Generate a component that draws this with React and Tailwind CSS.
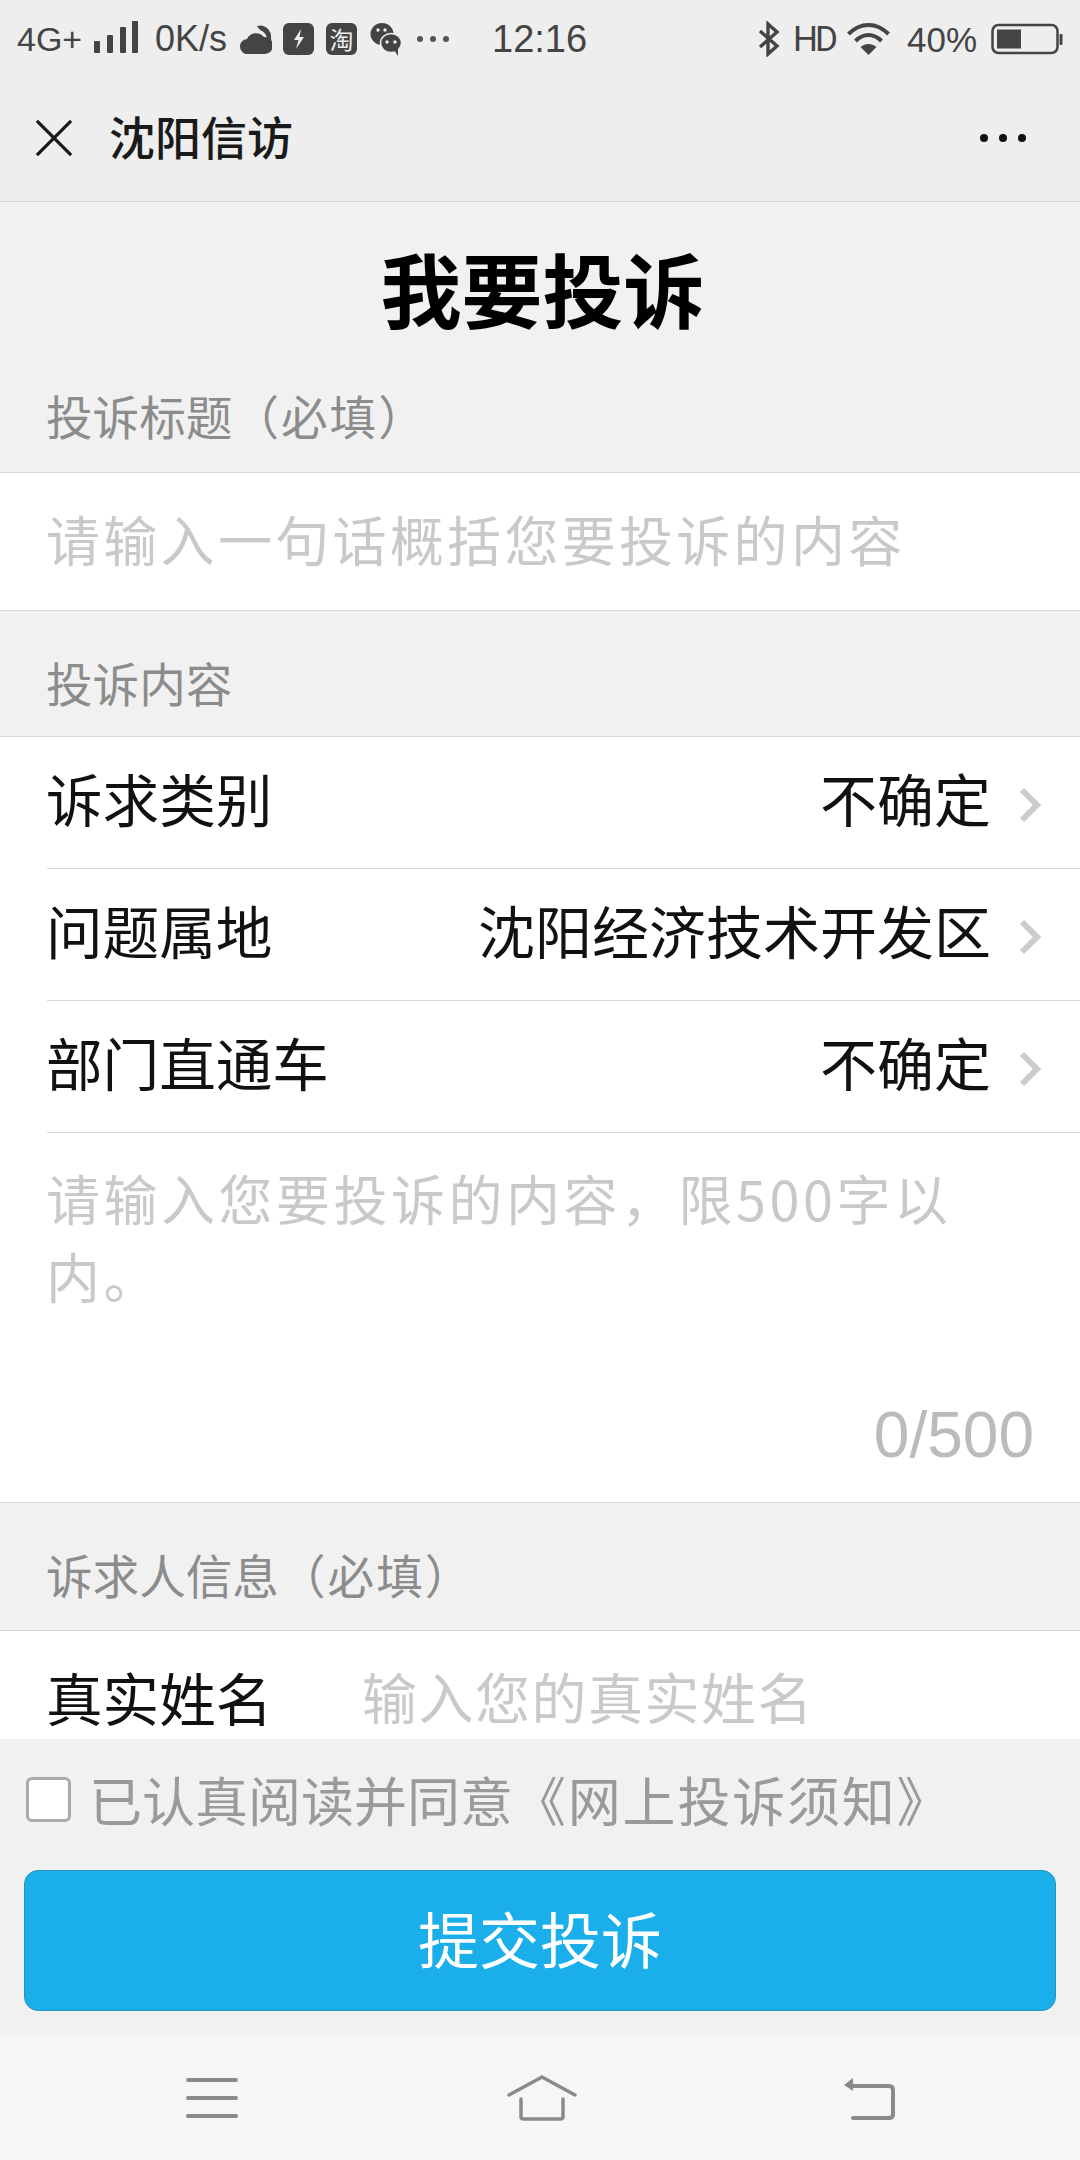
const cjk = { fontFamily: '"Noto Sans CJK SC", "Noto Sans", sans-serif' };
const latin = { fontFamily: '"Liberation Sans", Arial, sans-serif' };

function Chevron() {
  return (
    <svg width="24" height="38" viewBox="0 0 24 38" className="shrink-0 mt-[4px]" fill="none">
      <path d="M4 4 L19 19 L4 34" stroke="#cccccc" strokeWidth="6" />
    </svg>
  );
}

function SelectRow({ label, value }) {
  return (
    <div className="ml-[47px] h-[132px] flex items-center border-b border-[#d9d9d9] pr-[38px]">
      <span className="text-[56.6px] leading-none text-[#111] flex-1 font-normal -ml-[1px] mb-[10px]">{label}</span>
      <span className="text-[57px] leading-none text-[#111] mr-[27px] mb-[10px]">{value}</span>
      <Chevron />
    </div>
  );
}

function StatusBar() {
  return (
    <div className="h-[78px] flex items-center text-[#444] relative" style={latin}>
      <span className="ml-[17px] text-[34px] leading-none w-[66px] whitespace-nowrap">4G+</span>
      <svg width="46" height="34" viewBox="0 0 46 34" className="ml-[10px] mb-[4px]" fill="#444">
        <rect x="1" y="21" width="6" height="12" rx="1" />
        <rect x="14" y="15" width="6" height="18" rx="1" />
        <rect x="27" y="7" width="6" height="26" rx="1" />
        <rect x="39" y="1" width="6" height="32" rx="1" />
      </svg>
      <span className="ml-[16px] text-[36px] leading-none w-[72px] whitespace-nowrap">0K/s</span>
      <svg width="32" height="32" viewBox="0 0 32 32" className="ml-[13px]" fill="#444">
        <path d="M8 31 a7.5 7.5 0 0 1 -1 -15 a10 10 0 0 1 17 -2 a8.5 8.5 0 0 1 1 17 z" />
        <path d="M17 3 a11 11 0 0 1 14 12 a8 8 0 0 1 -1 6 l-3 -4 a10 10 0 0 0 -7 -10 z" />
      </svg>
      <div className="ml-[11px] w-[31px] h-[32px] rounded-[6px] bg-[#444] flex items-center justify-center">
        <svg width="14" height="22" viewBox="0 0 14 22" fill="#eee">
          <path d="M9 1 L2 12 L6.5 12 L4 21 L12 9 L7.5 9 Z" />
        </svg>
      </div>
      <div className="ml-[12px] w-[31px] h-[32px] rounded-[6px] bg-[#444] flex items-center justify-center text-[#eee] text-[24px] leading-none" style={cjk}>淘</div>
      <svg width="32" height="34" viewBox="0 0 32 34" className="ml-[13px]" fill="#444">
        <ellipse cx="12" cy="12" rx="11.5" ry="11" />
        <ellipse cx="21" cy="21" rx="10.5" ry="9.5" stroke="#eee" strokeWidth="1.5" />
        <path d="M24 28 L28 34 L28 26 Z" />
        <circle cx="8" cy="8" r="1.7" fill="#eee" />
        <circle cx="15" cy="8" r="1.7" fill="#eee" />
        <circle cx="17" cy="20" r="1.7" fill="#eee" />
        <circle cx="25" cy="20" r="1.7" fill="#eee" />
      </svg>
      <svg width="32" height="8" viewBox="0 0 32 8" className="ml-[15px]" fill="#555">
        <circle cx="3" cy="4" r="3" />
        <circle cx="16" cy="4" r="3" />
        <circle cx="29" cy="4" r="3" />
      </svg>
      <span className="ml-[43px] text-[38px] leading-none w-[96px] whitespace-nowrap">12:16</span>
      <svg width="24" height="36" viewBox="0 0 22 36" className="ml-[169px]" fill="none" stroke="#444" strokeWidth="3.4">
        <path d="M2 10 L19 25 L10 33 L10 3 L19 11 L2 26" />
      </svg>
      <span className="ml-[12px] text-[35px] leading-none w-[44px] tracking-[-3px] whitespace-nowrap" style={{ fontFamily: 'Roboto, sans-serif' }}>HD</span>
      <svg width="45" height="34" viewBox="0 0 44 34" className="ml-[9px]" fill="none" stroke="#444" strokeWidth="4">
        <path d="M2 12 C14 0 30 0 42 12" />
        <path d="M9 19 C17 11 27 11 35 19" />
        <path d="M22 33 L14 25 C19 21 25 21 30 25 Z" fill="#444" stroke="none" />
      </svg>
      <span className="ml-[16px] text-[35px] leading-none w-[70px] whitespace-nowrap">40%</span>
      <svg width="72" height="32" viewBox="0 0 72 32" className="ml-[14px]" fill="none">
        <rect x="1.5" y="2" width="65" height="28" rx="6" stroke="#444" strokeWidth="2.5" />
        <rect x="6" y="6.5" width="24" height="19" fill="#444" />
        <rect x="68.5" y="11" width="3" height="11" rx="1" fill="#444" />
      </svg>
    </div>
  );
}

function NavBar() {
  return (
    <div className="h-[124px] flex items-center border-b border-[#d6d6d6] pb-[4px]">
      <svg width="38" height="38" viewBox="0 0 40 40" className="ml-[35px]" fill="none" stroke="#1a1a1a" strokeWidth="3.4">
        <path d="M2 2 L38 38 M38 2 L2 38" />
      </svg>
      <span className="ml-[36px] text-[46px] leading-none font-medium text-[#1a1a1a] flex-1 mb-[6px]">沈阳信访</span>
      <svg width="46" height="10" viewBox="0 0 46 10" className="mr-[54px]" fill="#111">
        <circle cx="4" cy="5" r="4" />
        <circle cx="23" cy="5" r="4" />
        <circle cx="42" cy="5" r="4" />
      </svg>
    </div>
  );
}

function SectionLabel({ children, h }) {
  return <div className={`pl-[46px] flex items-center text-[46.6px] leading-none text-[#8c8c8c] whitespace-pre ${h}`}>{children}</div>;
}

export default function App() {
  return (
    <div className="w-[1080px] h-[2160px] bg-[#f1f1f1] flex flex-col overflow-hidden [text-spacing-trim:space-all]" style={cjk}>
      <div className="bg-[#eeeeee]">
        <StatusBar />
        <NavBar />
      </div>

      <div className="flex-1 min-h-0 overflow-hidden">
        <h1 className="h-[176px] flex items-center justify-center text-[81px] leading-none font-bold text-black pb-[8px] pl-[5px]">我要投诉</h1>
        <SectionLabel h="h-[94px] pb-[20px]">
          <span>投诉标题<span className="tracking-[2px]">（必填）</span></span>
        </SectionLabel>
        <div className="h-[139px] bg-white border-y border-[#d9d9d9] pl-[46px] pb-[6px] flex items-center text-[54px] leading-none text-[#c9c9c9] tracking-[3.3px] whitespace-nowrap">
          请输入一句话概括您要投诉的内容
        </div>
        <SectionLabel h="h-[125px] pt-[18px]">投诉内容</SectionLabel>
        <div className="bg-white border-t border-b border-[#d9d9d9] h-[767px]">
          <SelectRow label="诉求类别" value="不确定" />
          <SelectRow label="问题属地" value="沈阳经济技术开发区" />
          <SelectRow label="部门直通车" value="不确定" />
          <div className="pl-[46px] pr-[120px] pt-[26px] text-[54px] leading-[78px] text-[#c9c9c9] tracking-[3.5px] h-[370px] relative">
            请输入您要投诉的内容，限500字以内。
            <span className="absolute right-[46px] bottom-[36px] text-[64px] leading-none tracking-normal text-[#bbbbbb]" style={latin}>0/500</span>
          </div>
        </div>
        <SectionLabel h="h-[127px] pt-[16px]">
          <span>诉求人信息<span className="tracking-[2px]">（必填）</span></span>
        </SectionLabel>
        <div className="bg-white border-t border-[#d9d9d9] pl-[46px] h-[160px] flex items-start pt-[37px]">
          <span className="text-[56.6px] leading-none text-[#111] w-[316px]">真实姓名</span>
          <span className="text-[55px] leading-none text-[#c9c9c9] tracking-[1.5px]">输入您的真实姓名</span>
        </div>
      </div>

      <div className="bg-[#f1f1f1] h-[296px] shrink-0 px-[24px] flex flex-col">
        <div className="h-[131px] flex items-center">
          <span className="w-[45px] h-[45px] ml-[2px] mb-[10px] bg-white border-[3px] border-[#aaaaaa] rounded-[6px] shrink-0" />
          <span className="ml-[18px] mb-[10px] text-[53px] leading-none text-[#9a9a9a] whitespace-nowrap">
            已认真阅读并同意<span className="tracking-[1.8px]">《网上投诉须知》</span>
          </span>
        </div>
        <button className="h-[141px] rounded-[14px] bg-[#1aaeea] border border-[#2a95bd] text-white text-[61px] leading-none flex items-center justify-center pb-[6px]">
          提交投诉
        </button>
      </div>

      <div className="bg-[#f5f6f6] h-[125px] shrink-0 flex items-center">
        <svg width="52" height="42" viewBox="0 0 52 42" className="ml-[186px]" fill="none" stroke="#8a8a8a" strokeWidth="4" strokeLinecap="round">
          <path d="M2 3 H50 M2 21 H50 M2 39 H50" />
        </svg>
        <svg width="70" height="46" viewBox="0 0 70 46" className="ml-[269px]" fill="none" stroke="#8a8a8a" strokeWidth="3.5" strokeLinejoin="round" strokeLinecap="round">
          <path d="M2 20 L35 2 L68 20" />
          <path d="M14 24 V42 Q14 44 17 44 H53 Q56 44 56 42 V24" />
        </svg>
        <svg width="52" height="44" viewBox="0 0 52 44" className="ml-[266px]" fill="none" stroke="#8a8a8a" strokeWidth="4" strokeLinecap="round">
          <path d="M8 10 H46 Q50 10 50 14 V38 Q50 42 46 42 H10" />
          <path d="M1 9 L10 2 V15 Z" fill="#8a8a8a" stroke="none" />
        </svg>
      </div>
    </div>
  );
}
